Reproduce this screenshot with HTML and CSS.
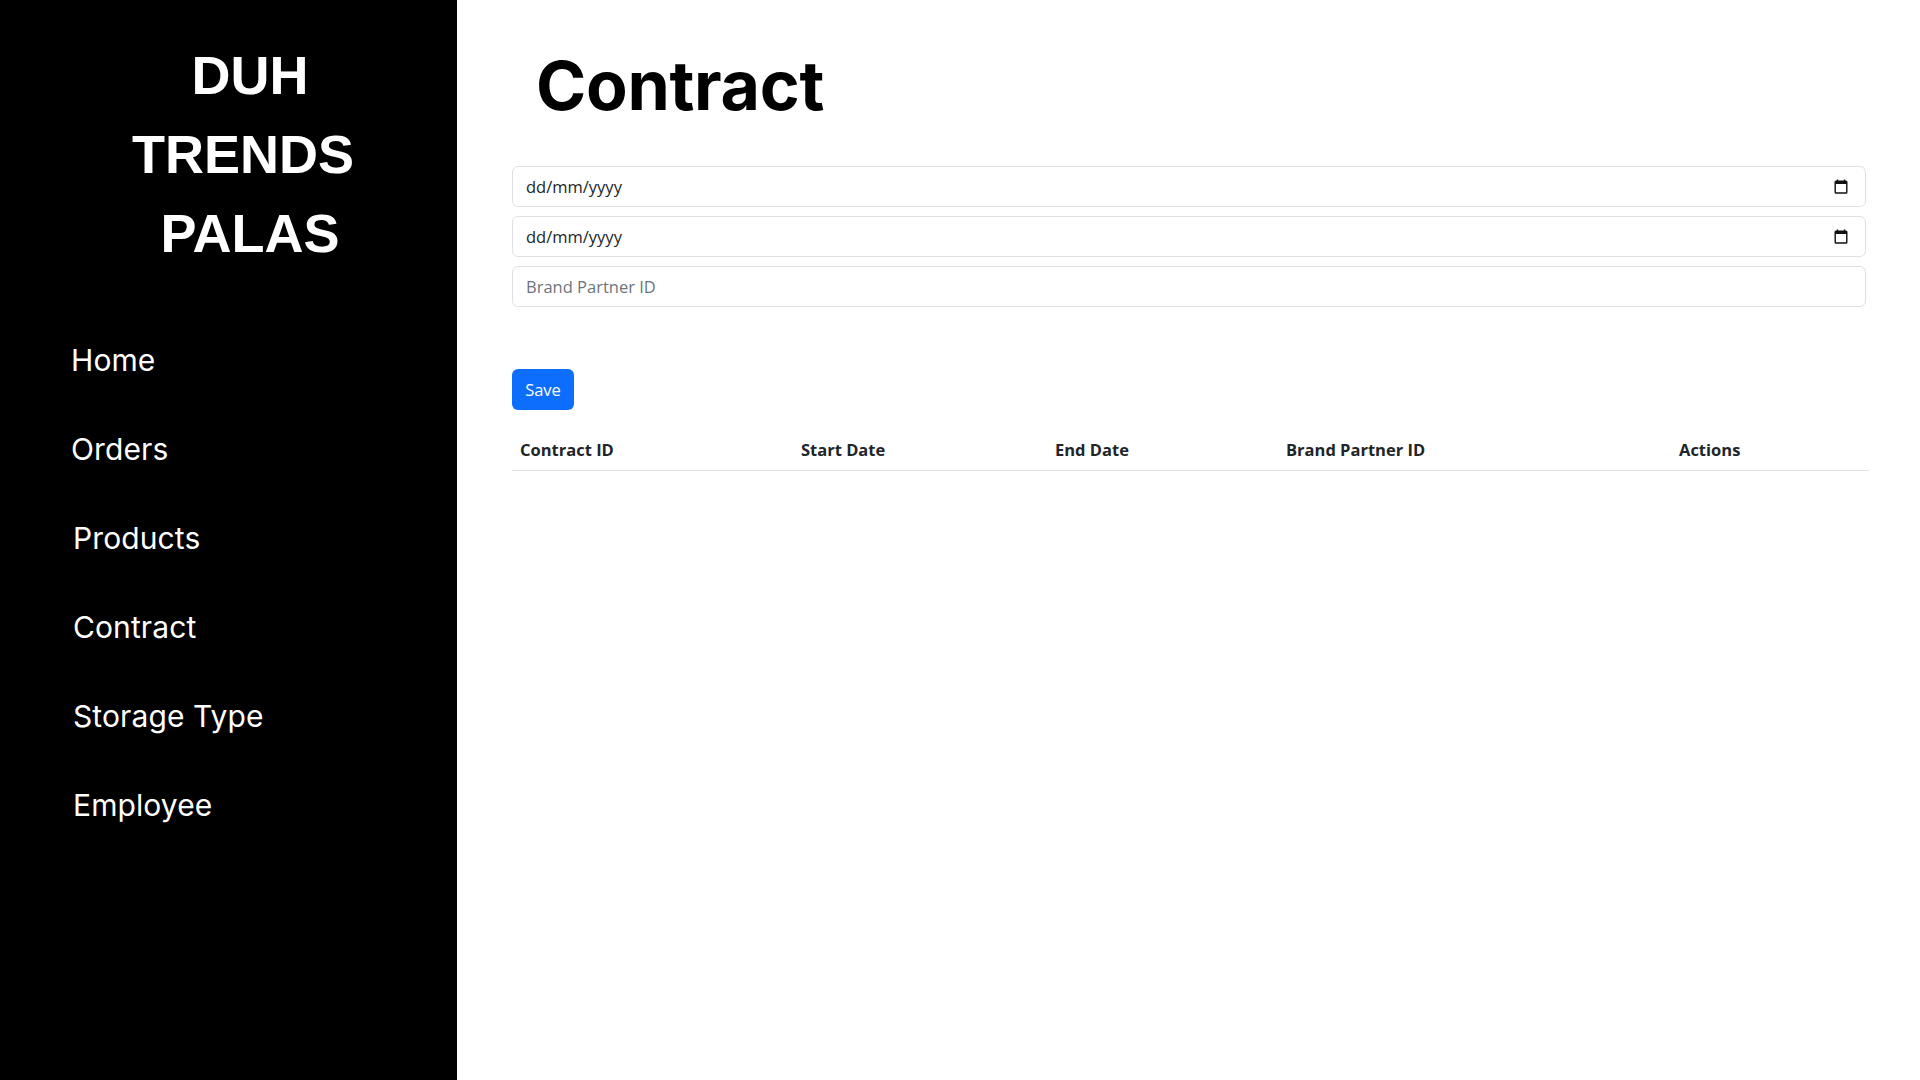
FILE: index.html
```html
<!DOCTYPE html>
<html lang="en">
<head>
<meta charset="utf-8">
<title>Contract</title>
<link rel="stylesheet" href="styles.css">
</head>
<body>
<aside class="sidebar">
  <div class="brand">
    <div class="brand-line shifted">DUH</div>
    <div class="brand-line">TRENDS</div>
    <div class="brand-line shifted">PALAS</div>
  </div>
  <nav class="nav">
    <a class="nav-link first" href="#">Home</a>
    <a class="nav-link first" href="#">Orders</a>
    <a class="nav-link" href="#">Products</a>
    <a class="nav-link" href="#">Contract</a>
    <a class="nav-link" href="#">Storage Type</a>
    <a class="nav-link" href="#">Employee</a>
  </nav>
</aside>
<main class="main">
  <h1 class="page-title">Contract</h1>
  <form class="form">
    <div class="field date-field">
      <span class="date-text">dd/mm/yyyy</span>
      <svg class="cal-icon" width="14" height="15" viewBox="0 0 14 15" aria-hidden="true">
        <path d="M3.5 0.5v2.5M10.5 0.5v2.5" stroke="#111" stroke-width="1.4" fill="none"/>
        <rect x="1.2" y="2.2" width="11.6" height="11.8" rx="0.8" stroke="#111" stroke-width="1.4" fill="none"/>
        <rect x="1.2" y="2.2" width="11.6" height="2.8" fill="#111"/>
      </svg>
    </div>
    <div class="field date-field">
      <span class="date-text">dd/mm/yyyy</span>
      <svg class="cal-icon" width="14" height="15" viewBox="0 0 14 15" aria-hidden="true">
        <path d="M3.5 0.5v2.5M10.5 0.5v2.5" stroke="#111" stroke-width="1.4" fill="none"/>
        <rect x="1.2" y="2.2" width="11.6" height="11.8" rx="0.8" stroke="#111" stroke-width="1.4" fill="none"/>
        <rect x="1.2" y="2.2" width="11.6" height="2.8" fill="#111"/>
      </svg>
    </div>
    <input class="field text-field" type="text" placeholder="Brand Partner ID">
    <button class="btn-save" type="button">Save</button>
  </form>
  <table class="table">
    <colgroup>
      <col class="c1"><col class="c2"><col class="c3"><col class="c4"><col class="c5">
    </colgroup>
    <thead>
      <tr>
        <th>Contract ID</th>
        <th>Start Date</th>
        <th>End Date</th>
        <th>Brand Partner ID</th>
        <th>Actions</th>
      </tr>
    </thead>
    <tbody></tbody>
  </table>
</main>
</body>
</html>
```
FILE: styles.css
```css
* { box-sizing: border-box; }
html, body { margin: 0; padding: 0; height: 100%; }
body {
  display: flex;
  min-height: 1080px;
  background: #fff;
  font-family: "Open Sans", "Noto Sans", sans-serif;
  color: #212529;
}
.sidebar {
  width: 457px;
  flex: 0 0 457px;
  background: #000;
  color: #fff;
  min-height: 1080px;
}
.brand {
  margin-top: 36px;
  padding-left: 29px;
  text-align: center;
  font-family: "Liberation Sans", Arial, sans-serif;
  font-weight: 700;
  font-size: 54px;
  line-height: 79px;
}
.brand-line.shifted { padding-left: 14px; }
.nav {
  display: flex;
  flex-direction: column;
  margin-top: 43px;
}
.nav-link {
  display: block;
  color: #fff;
  text-decoration: none;
  font-family: Inter, "Open Sans", sans-serif;
  font-size: 30px;
  font-weight: 400;
  letter-spacing: 0.1px;
  line-height: 89px;
  padding-left: 73px;
}
.nav-link.first { padding-left: 71px; }
.main {
  flex: 1;
  padding: 0 51px 0 55px;
}
.page-title {
  margin: 45px 0 0 24px;
  font-family: Inter, "Liberation Sans", sans-serif;
  font-weight: 700;
  font-size: 68px;
  line-height: 80px;
  letter-spacing: -0.3px;
  color: #000;
}
.form {
  margin-top: 41px;
  display: flex;
  flex-direction: column;
  align-items: flex-start;
}
.field {
  width: calc(100% - 3px);
  height: 41px;
  margin-bottom: 9px;
  border: 1px solid #dee2e6;
  border-radius: 6px;
  background: #fff;
  font-family: "Open Sans", "Noto Sans", sans-serif;
  font-size: 16.5px;
  color: #212529;
}
.date-field {
  display: flex;
  align-items: center;
  justify-content: space-between;
  padding: 0 17px 0 13px;
}
.cal-icon { display: block; margin-top: -1px; }
.text-field {
  padding: 0 13px;
  outline: none;
}
.text-field::placeholder { color: #6c757d; opacity: 1; }
.btn-save {
  margin-top: 53px;
  height: 41px;
  width: 62px;
  padding: 0;
  border: none;
  border-radius: 6px;
  background: #0d6efd;
  color: #fff;
  font-family: "Open Sans", "Noto Sans", sans-serif;
  font-size: 16.5px;
}
.table {
  margin-top: 19px;
  width: 100%;
  border-collapse: collapse;
  table-layout: fixed;
}
.c1 { width: 281px; }
.c2 { width: 254px; }
.c3 { width: 231px; }
.c4 { width: 393px; }
.c5 { width: 198px; }
.table th {
  text-align: left;
  padding: 8px;
  font-family: "Open Sans", "Noto Sans", sans-serif;
  font-weight: 700;
  font-size: 16.5px;
  line-height: 25px;
  color: #212529;
  border-bottom: 1px solid #dee2e6;
}
```
